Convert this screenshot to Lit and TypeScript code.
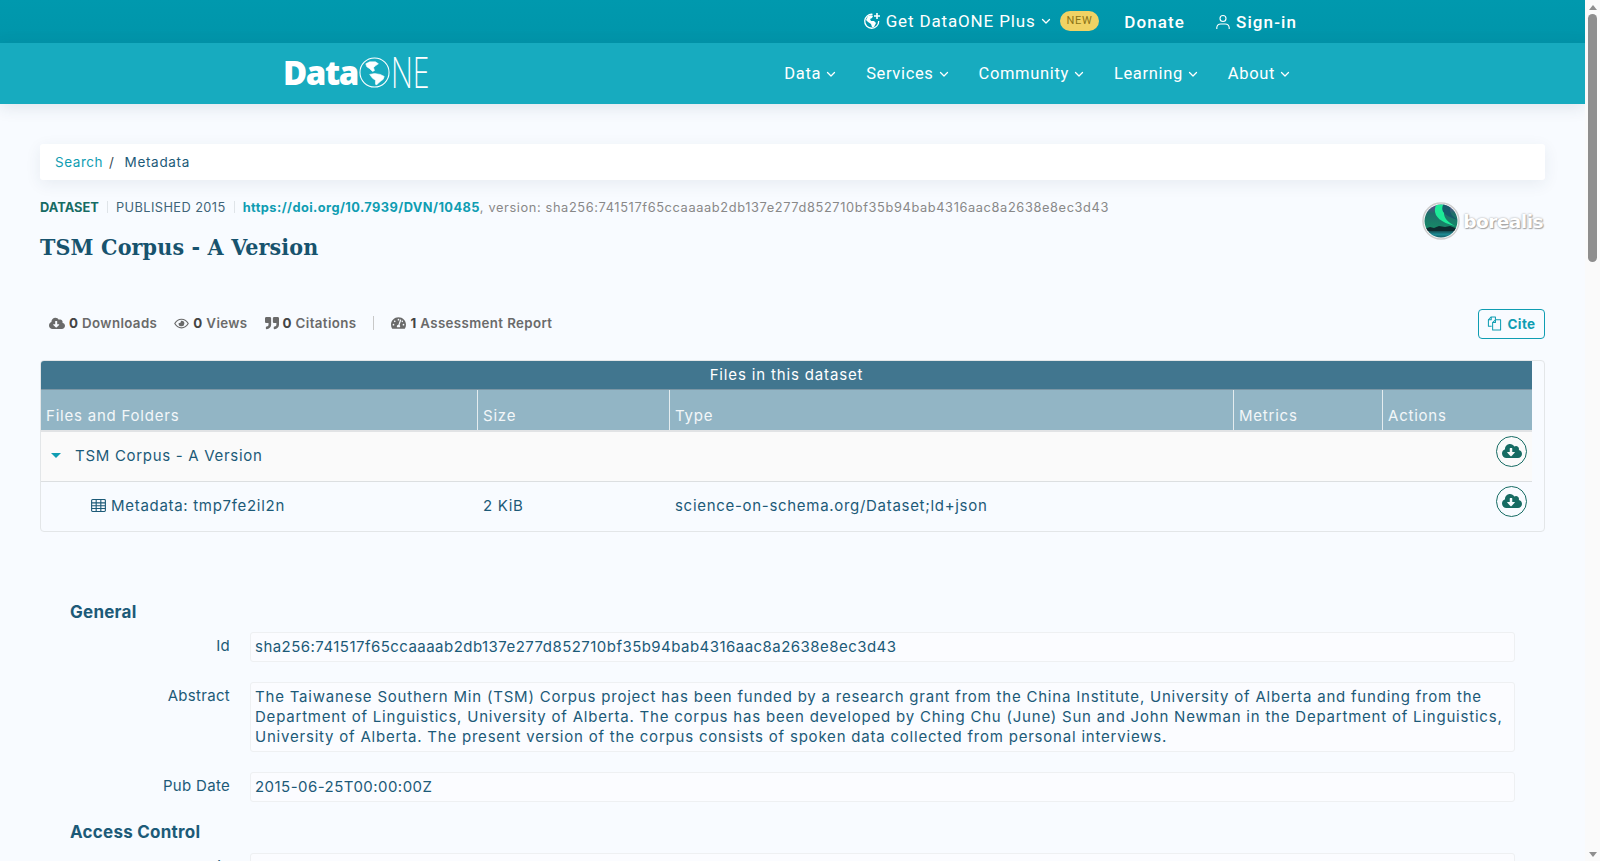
import { LitElement, html, css } from "lit";
import { customElement } from "lit/decorators.js";

const chev = html`<svg class="chev" viewBox="0 0 10 10" width="10" height="10"><path d="M1.5 3.5 5 7l3.5-3.5" fill="none" stroke="currentColor" stroke-width="1.3" stroke-linecap="round" stroke-linejoin="round"/></svg>`;
const cloud = (s: number) => html`<svg viewBox="0 0 640 512" width="${s}" height="${(s * 512) / 640}" fill="currentColor"><path d="M537.6 226.6c4.1-10.7 6.4-22.4 6.4-34.6 0-53-43-96-96-96-19.7 0-38.1 6-53.3 16.2C367 64.2 315.3 32 256 32c-88.4 0-160 71.6-160 160 0 2.7.1 5.4.2 8.1C40.2 219.8 0 273.2 0 336c0 79.5 64.5 144 144 144h368c70.7 0 128-57.3 128-128 0-61.9-44-113.6-102.4-125.4zm-132.9 88.7L299.3 420.7c-6.2 6.2-16.4 6.2-22.6 0L171.3 315.3c-10.1-10.1-2.9-27.3 11.3-27.3H248V176c0-8.8 7.2-16 16-16h48c8.8 0 16 7.2 16 16v112h65.4c14.2 0 21.4 17.2 11.3 27.3z"/></svg>`;

@customElement("app-root")
export class AppRoot extends LitElement {
  static styles = css`
    :host { display: block; font-family: "Inter", "Liberation Sans", sans-serif; color: #1c5a78; }
    * { box-sizing: border-box; }
    .shell { display: flex; height: 100vh; overflow: hidden; background: #f8fbff; }
    .main { flex: 1; min-width: 0; overflow: hidden; }
    .scrollbar { width: 15px; flex: none; background: #fafafa; display: flex; flex-direction: column; align-items: center; justify-content: space-between; }
    .sb-top { display: flex; flex-direction: column; align-items: center; padding-top: 5px; gap: 4px; }
    .arrow { width: 0; height: 0; border-left: 4.5px solid transparent; border-right: 4.5px solid transparent; }
    .arrow.up { border-bottom: 5px solid #8e8e8e; }
    .arrow.down { border-top: 5px solid #8e8e8e; margin-bottom: 4px; }
    .thumb { width: 9px; height: 248px; border-radius: 5px; background: #8e8e8e; }

    .topbar { height: 43px; background: linear-gradient(#0099ae, #0095aa); display: flex; justify-content: flex-end; align-items: center; color: #fff; font-family: "Roboto", sans-serif; padding-right: 288px; }
    .plus { display: flex; align-items: center; font-size: 17px; letter-spacing: .85px; margin-top: -1px; white-space: nowrap; }
    .plus svg.globe { margin-right: 5px; }
    .plus .chev { margin-left: 5px; }
    .new { background: #f0d264; color: #8c7417; font-size: 11px; letter-spacing: .6px; border-radius: 10px; padding: 0 7px; height: 20px; line-height: 20px; margin-left: 9px; margin-top: -2px; }
    .donate { font-size: 17px; font-weight: 500; letter-spacing: 1.1px; margin-left: 25px; }
    .signin { display: flex; align-items: center; gap: 5px; font-size: 17px; font-weight: 500; letter-spacing: 1.1px; margin-left: 30px; }

    .nav { height: 61px; background: #17abbf; display: flex; align-items: center; justify-content: space-between; color: #fff; padding: 0 295px 0 283px; position: relative; box-shadow: 0 3px 16px rgba(30,60,80,.12); }
    .logo { display: flex; align-items: center; font-family: "Open Sans", sans-serif; height: 34px; margin-top: -3px; }
    .logo .d { font-size: 33px; font-weight: 800; letter-spacing: -1.4px; }
    .logo .ne { font-family: "Inter", sans-serif; font-size: 42px; font-weight: 200; transform: scaleX(.68); transform-origin: left; width: 38px; margin-left: 1px; }
    .links { display: flex; gap: 30px; font-family: "Roboto", sans-serif; font-size: 16.5px; letter-spacing: .65px; }
    .links span { display: flex; align-items: center; gap: 5px; }

    .content { padding: 40px 40px 0; }
    .crumb { height: 36px; background: #fff; border-radius: 3px; box-shadow: 0 4px 16px rgba(40,70,90,.08); display: flex; align-items: center; padding-left: 15px; font-size: 13.5px; letter-spacing: .55px; }
    .crumb a { color: #0f9db2; }
    .crumb i { font-style: normal; margin: 0 10px 0 6px; color: #3a4a55; }
    .crumb span { letter-spacing: .68px; }
    .head { display: flex; justify-content: space-between; height: 129px; }
    .citation { display: flex; align-items: center; font-size: 12.8px; height: 16px; margin-top: 19px; color: #888; white-space: nowrap; letter-spacing: .62px; }
    .citation b.kind { color: #166b63; font-weight: 700; letter-spacing: .05px; }
    .citation .sep { width: 1px; height: 12px; background: #dfe4e8; margin: 0 8px; }
    .citation .pub { color: #3f6478; letter-spacing: .42px; }
    .citation a { color: #0f9db2; font-weight: 700; letter-spacing: .43px; }
    h1 { margin: 17px 0 0; font-family: "DejaVu Serif Condensed", "DejaVu Serif", serif; font-weight: 700; font-size: 23px; letter-spacing: .14px; color: #17536e; line-height: 30px; }
    .borealis { display: flex; align-items: center; margin-top: 22px; height: 38px; margin-right: 2px; }
    .borealis span { font-family: "DejaVu Sans", sans-serif; font-weight: 700; font-size: 18.5px; color: #fff; text-shadow: 0 0 2px #999, 1px 1px 1px #aaa; letter-spacing: -.5px; margin-left: 3px; }

    .stats { display: flex; align-items: center; height: 30px; margin-top: -1px; font-size: 13.3px; color: #6a6a6a; font-weight: 600; padding-left: 9px; letter-spacing: .38px; }
    .stat { display: flex; align-items: center; gap: 4px; margin-right: 17px; }
    .stat b { color: #444; font-weight: 700; }
    .vbar { width: 1px; height: 14px; background: #c8c8c8; margin: 0 17px 0 0; }
    .cite { margin-left: auto; width: 67px; height: 30px; margin-top: 1px; border: 1px solid #0f9db2; border-radius: 4px; color: #0f9db2; font-weight: 700; font-size: 13.5px; display: flex; align-items: center; justify-content: center; gap: 5px; background: transparent; }

    .files { margin-top: 22px; border: 1px solid #e3e6e8; border-radius: 4px; height: 172px; overflow: hidden; padding-right: 12px; }
    .title { height: 29px; background: #41768f; color: #fff; text-align: center; border-bottom: 1px solid #7b96a5; font-size: 15px; line-height: 28px; letter-spacing: .85px; }
    .row { display: grid; grid-template-columns: 437px 192px 564px 149px 1fr; font-size: 15px; letter-spacing: .7px; }
    .th { background: #92b5c5; color: #f3f7f9; height: 42px; border-bottom: 2px solid #e1e3e5; letter-spacing: .78px; }
    .th div { padding: 17px 0 0 5px; line-height: 18px; border-right: 1px solid #e4ecef; height: 40px; }
    .th div:last-child { border: 0; }
    .tr { height: 50px; border-bottom: 1px solid #dcdfe1; align-items: center; padding-bottom: 2px; }
    .tr.alt { background: #fafafa; }
    .tr.last { border: 0; height: 49px; }
    .tr > div { padding-left: 5px; }
    .name { display: flex; align-items: center; }
    .caret { width: 0; height: 0; border-left: 5px solid transparent; border-right: 5px solid transparent; border-top: 5.5px solid #0f9db2; margin: 0 14px 0 5px; }
    .tr .act { display: flex; justify-content: flex-end; padding: 0 5px 9px 0; }
    .dl { width: 31px; height: 31px; border: 1px solid #166b63; border-radius: 50%; color: #166b63; display: flex; align-items: center; justify-content: center; }

    .meta { padding: 0 30px; margin-top: 68px; }
    h2 { margin: 0; font-size: 17px; font-weight: 700; line-height: 24px; color: #1c5a78; letter-spacing: .25px; }
    .field { display: grid; grid-template-columns: 160px 1fr; column-gap: 20px; font-size: 15px; line-height: 20px; letter-spacing: .79px; }
    .field label { text-align: right; padding-top: 4px; letter-spacing: .3px; }
    .val { background: #fbfcff; border: 1px solid #eef0f2; border-radius: 3px; padding: 4px; min-height: 30px; margin-bottom: 20px; }
    .val.num { letter-spacing: .46px; }
    .first { margin-top: 8px; }
    .ac { margin: -2px 0 9px; }
  `;

  render() {
    return html`<div class="shell">
      <div class="main">
        <div class="topbar">
          <div class="plus">
            <svg class="globe" viewBox="0 0 18 18" width="18" height="18" fill="none" stroke="#fff" stroke-width="1.3"><path d="M9.5 2.3A7 7 0 1 0 15.7 9" /><path fill="#fff" stroke="none" d="M5 4c2-1 4-1 5 0l-1 2-2 1 1 2 3 0 2 2-2 4-2 0-1-3-3-2-2-2z"/><path d="M14 1v6M11 4h6" stroke-width="1.6"/></svg>
            Get DataONE Plus ${chev}
          </div>
          <span class="new">NEW</span>
          <span class="donate">Donate</span>
          <span class="signin"><svg viewBox="0 0 16 16" width="16" height="16" fill="none" stroke="#fff" stroke-width="1.1"><circle cx="8" cy="4.5" r="3"/><path d="M1.8 15v-1.5A4 4 0 0 1 5.8 10h4.4a4 4 0 0 1 4 3.5V15"/></svg>Sign-in</span>
        </div>
        <div class="nav">
          <div class="logo">
            <span class="d">Data</span>
            <svg viewBox="0 0 32 32" width="31" height="31" style="margin-left:1px"><circle cx="16" cy="16" r="15" fill="none" stroke="#fff" stroke-width="1.1"/><path fill="#fff" stroke="#fff" stroke-width=".6" stroke-linejoin="round" d="M7 7l4-2 6 0 3 2-3 2-2 2 1 3-2 1-3-3-3-2zM11 18l5-1 6 1 4 2-1 3-4 3-3 3-1-1 0-4-3-2z"/></svg>
            <span class="ne">NE</span>
          </div>
          <div class="links">
            <span>Data ${chev}</span><span>Services ${chev}</span><span>Community ${chev}</span><span>Learning ${chev}</span><span>About ${chev}</span>
          </div>
        </div>
        <div class="content">
          <div class="crumb"><a>Search</a><i>/</i><span>Metadata</span></div>
          <div class="head">
            <div>
              <div class="citation"><b class="kind">DATASET</b><span class="sep"></span><span class="pub">PUBLISHED 2015</span><span class="sep"></span><a>https://doi.org/10.7939/DVN/10485</a>, version: sha256:741517f65ccaaaab2db137e277d852710bf35b94bab4316aac8a2638e8ec3d43</div>
              <h1>TSM Corpus - A Version</h1>
            </div>
            <div class="borealis">
              <svg viewBox="0 0 38 38" width="38" height="38"><defs><clipPath id="c"><circle cx="19" cy="19" r="16.5"/></clipPath><linearGradient id="g" x1="0" y1="0" x2="0" y2="1"><stop offset="0" stop-color="#7a3a9c"/><stop offset=".3" stop-color="#1f6f6a"/><stop offset=".7" stop-color="#168a68"/><stop offset=".72" stop-color="#0d2b2f"/><stop offset=".85" stop-color="#1e8c94"/><stop offset="1" stop-color="#0d3a45"/></linearGradient></defs><circle cx="19" cy="19" r="18" fill="#fff" stroke="#ccc" stroke-width="1.5"/><g clip-path="url(#c)"><rect width="38" height="38" fill="url(#g)"/><path d="M15 1c-5 9-2 18 18 23-11-6-14-12-8-23z" fill="#1dea98"/><path d="M22 1c-4 7-2 12 14 17-8-5-10-10-6-17z" fill="#175a6a"/><path d="M2 27l6-2 4 1 5-2 6 1 5-1 8 3v2H2z" fill="#0d2b2f"/></g></svg>
              <span>borealis</span>
            </div>
          </div>
          <div class="stats">
            <span class="stat">${cloud(16)}<span><b>0</b> Downloads</span></span>
            <span class="stat"><svg viewBox="0 0 576 512" width="15" height="13" fill="#6a6a6a"><path d="M288 144a110.94 110.94 0 0 0-31.24 5 55.4 55.4 0 0 1 7.24 27 56 56 0 0 1-56 56 55.4 55.4 0 0 1-27-7.24A111.71 111.71 0 1 0 288 144zm284.52 97.4C518.29 135.59 410.93 64 288 64S57.68 135.64 3.48 241.41a32.35 32.35 0 0 0 0 29.19C57.71 376.41 165.07 448 288 448s230.32-71.64 284.52-177.41a32.35 32.35 0 0 0 0-29.19zM288 400c-98.65 0-189.09-55-237.93-144C98.91 167 189.34 112 288 112s189.09 55 237.93 144C477.1 345 386.66 400 288 400z"/></svg><span><b>0</b> Views</span></span>
            <span class="stat"><svg viewBox="0 0 512 512" width="14" height="14" fill="#6a6a6a"><path d="M464 32H336c-26.5 0-48 21.5-48 48v128c0 26.5 21.5 48 48 48h80v64c0 35.3-28.7 64-64 64h-8c-13.3 0-24 10.7-24 24v48c0 13.3 10.7 24 24 24h8c88.4 0 160-71.6 160-160V80c0-26.5-21.5-48-48-48zm-288 0H48C21.5 32 0 53.5 0 80v128c0 26.5 21.5 48 48 48h80v64c0 35.3-28.7 64-64 64h-8c-13.3 0-24 10.7-24 24v48c0 13.3 10.7 24 24 24h8c88.4 0 160-71.6 160-160V80c0-26.5-21.5-48-48-48z"/></svg><span><b>0</b> Citations</span></span>
            <span class="vbar"></span>
            <span class="stat"><svg viewBox="0 0 576 512" width="15" height="14" fill="#6a6a6a"><path d="M288 32C128.94 32 0 160.94 0 320c0 52.8 14.25 102.26 39.06 144.8 5.61 9.62 16.3 15.2 27.44 15.2h443c11.14 0 21.83-5.58 27.44-15.2C561.75 422.26 576 372.8 576 320c0-159.06-128.94-288-288-288zm0 64a32 32 0 1 1 0 64 32 32 0 0 1 0-64zM96 352a32 32 0 1 1 0-64 32 32 0 0 1 0 64zm48-128a32 32 0 1 1 0-64 32 32 0 0 1 0 64zm246.77-72.41-61.33 184C343.13 347.33 352 364.54 352 384c0 11.72-3.38 22.55-8.88 32H232.88c-5.5-9.45-8.88-20.28-8.88-32 0-33.94 26.5-61.43 59.9-63.59l61.34-184.01c4.17-12.56 17.73-19.45 30.36-15.17 12.57 4.19 19.35 17.79 15.17 30.36zm14.66 57.2 15.52-46.55c3.47-1.29 7.13-2.23 11.05-2.23 17.67 0 32 14.33 32 32s-14.33 32-32 32c-11.38-.01-20.89-6.28-26.57-15.22zM480 352a32 32 0 1 1 0-64 32 32 0 0 1 0 64z"/></svg><span><b>1</b> Assessment Report</span></span>
            <div class="cite"><svg viewBox="0 0 16 16" width="15" height="15" fill="none" stroke="#0f9db2" stroke-width="1.1" stroke-linejoin="round"><path d="M5 11H1.5V4L4.5 1H9v3"/><path d="M4.5 1v3h-3"/><path d="M9 4l-3 3v8h8.5V4z"/><path d="M9 4v3H6"/></svg>Cite</div>
          </div>
          <div class="files">
            <div class="title">Files in this dataset</div>
            <div class="row th"><div>Files and Folders</div><div>Size</div><div>Type</div><div>Metrics</div><div>Actions</div></div>
            <div class="row tr alt"><div class="name" style="grid-column:1/5"><span class="caret"></span>TSM Corpus - A Version</div><div class="act"><span class="dl">${cloud(20)}</span></div></div>
            <div class="row tr last"><div class="name" style="padding-left:50px"><svg viewBox="0 0 16 14" width="15" height="13" fill="none" stroke="#1c5a78" stroke-width="1.2" style="margin-right:5px"><rect x=".6" y=".6" width="14.8" height="12.8" rx="1"/><path d="M.6 4.2h14.8M.6 7.2h14.8M.6 10.2h14.8M5.5 .6v12.8M10.5 .6v12.8"/></svg>Metadata: tmp7fe2il2n</div><div>2 KiB</div><div style="grid-column:3/5">science-on-schema.org/Dataset;ld+json</div><div class="act"><span class="dl">${cloud(20)}</span></div></div>
          </div>
          <div class="meta">
            <h2>General</h2>
            <div class="field first"><label>Id</label><div class="val num">sha256:741517f65ccaaaab2db137e277d852710bf35b94bab4316aac8a2638e8ec3d43</div></div>
            <div class="field"><label>Abstract</label><div class="val">The Taiwanese Southern Min (TSM) Corpus project has been funded by a research grant from the China Institute, University of Alberta and funding from the Department of Linguistics, University of Alberta. The corpus has been developed by Ching Chu (June) Sun and John Newman in the Department of Linguistics, University of Alberta. The present version of the corpus consists of spoken data collected from personal interviews.</div></div>
            <div class="field"><label>Pub Date</label><div class="val num">2015-06-25T00:00:00Z</div></div>
            <h2 class="ac">Access Control</h2>
            <div class="field"><label>Public</label><div class="val"></div></div>
          </div>
        </div>
      </div>
      <div class="scrollbar">
        <div class="sb-top"><span class="arrow up"></span><span class="thumb"></span></div>
        <span class="arrow down"></span>
      </div>
    </div>`;
  }
}
